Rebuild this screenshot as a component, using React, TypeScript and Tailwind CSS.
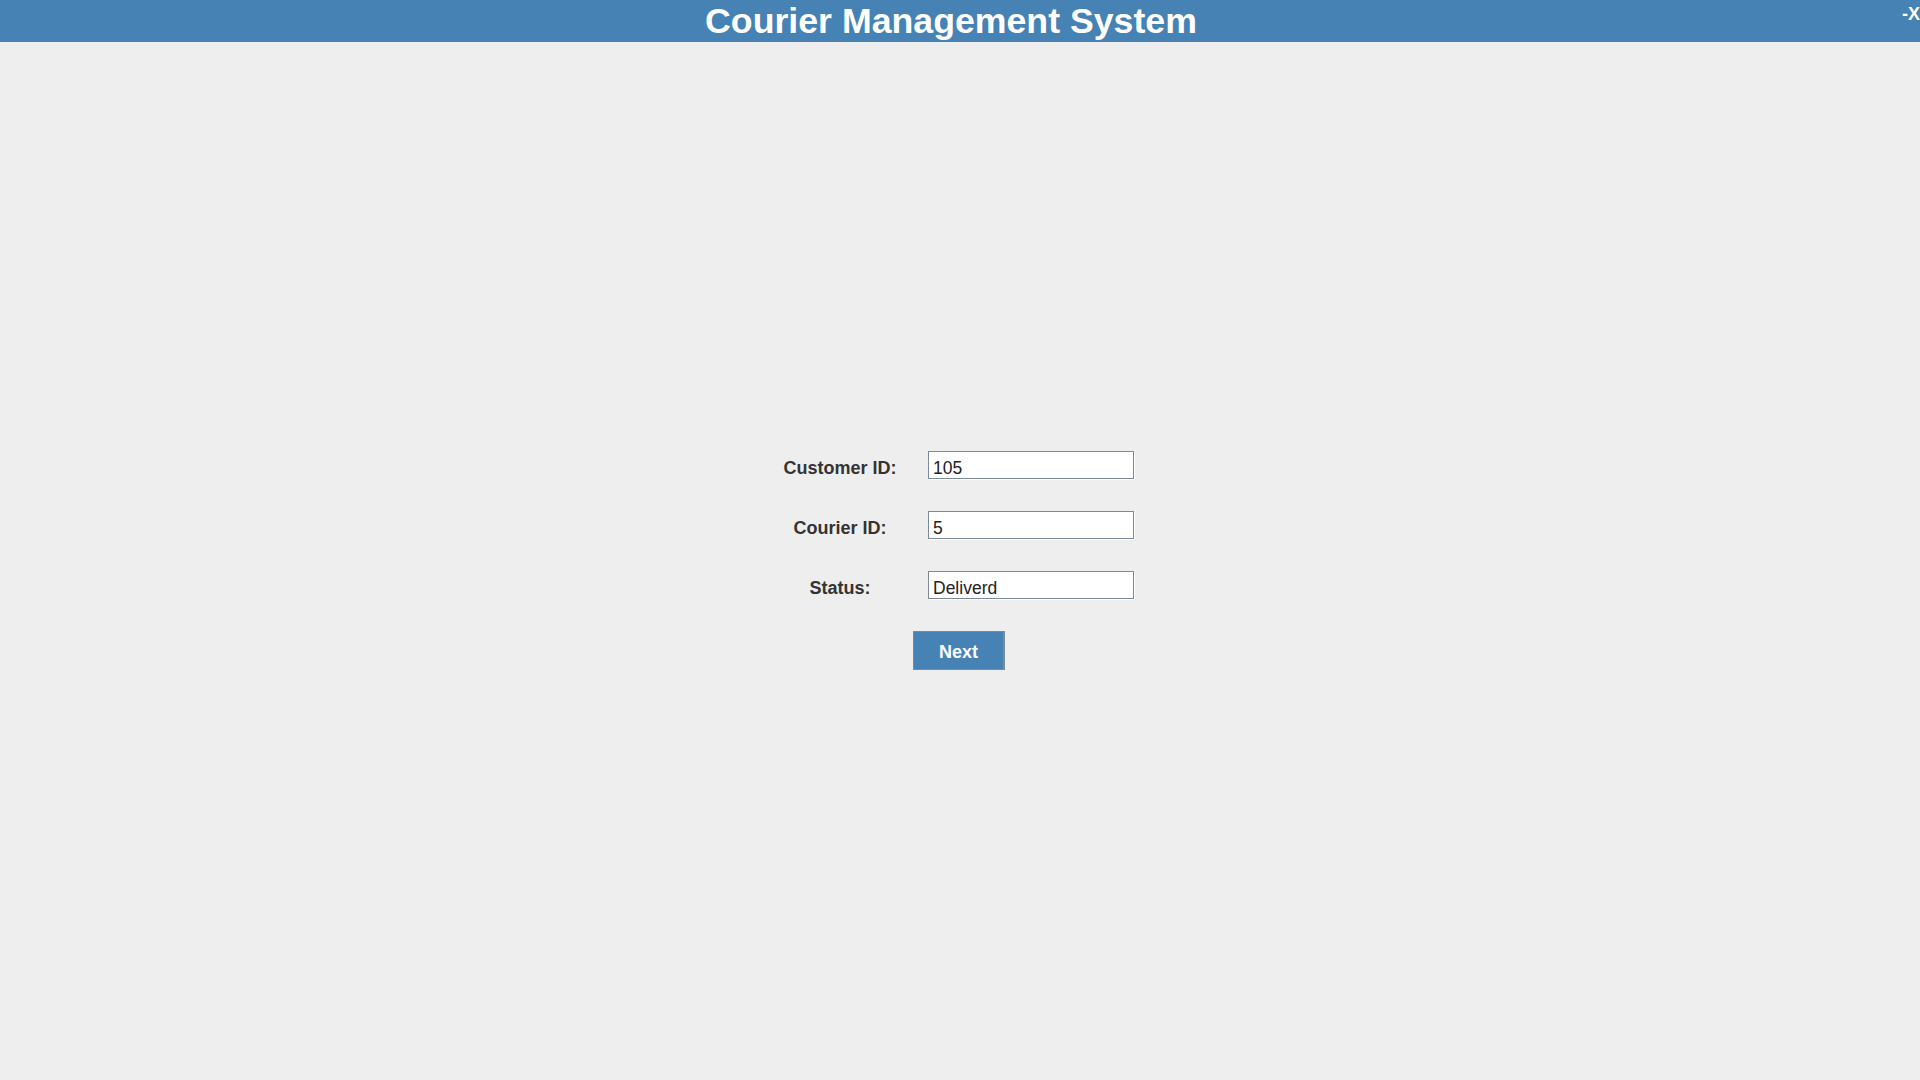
import { useState } from 'react';

const fields = [
  { label: 'Customer ID:', value: '105' },
  { label: 'Courier ID:', value: '5' },
  { label: 'Status:', value: 'Deliverd' },
];

export default function App() {
  const [values, setValues] = useState(fields.map((f) => f.value));

  return (
    <main
      className="w-full h-screen flex flex-col bg-[#eeeeee]"
      style={{ fontFamily: '"Liberation Sans", Arial, sans-serif' }}
    >
      {/* title bar */}
      <header className="h-[42px] flex bg-[#4682b4] text-white">
        <h1 className="flex-1 text-center text-[35.7px] leading-[42px] font-bold">
          Courier Management System
        </h1>
        <button className="w-[18px] pt-[4px] self-start text-[18px] leading-[20px] font-bold text-white">
          -X
        </button>
      </header>

      {/* form */}
      <section className="flex-1 flex items-center justify-center pb-[2px]">
        <form
          className="w-[400px] flex flex-col gap-8"
          onSubmit={(e) => e.preventDefault()}
        >
          {fields.map((f, i) => (
            <div key={f.label} className="flex items-start gap-2">
              <label className="w-[160px] pt-[7px] text-center text-[18px] leading-[20px] font-bold text-[#333333]">
                {f.label}
              </label>
              <input
                value={values[i]}
                onChange={(e) =>
                  setValues((v) => v.map((x, j) => (j === i ? e.target.value : x)))
                }
                className="w-[206px] h-[28px] pl-[4px] pt-[7px] pb-0 bg-white border border-[#7a8a99] text-[17.5px] leading-[20px] text-[#222222] outline-none shadow-[1px_1px_0_#ffffff]"
              />
            </div>
          ))}
          <div className="flex justify-center pr-[2px]">
            <button
              type="submit"
              className="w-[92px] h-[39px] pt-[4px] bg-[#4682b4] border border-r-2 border-[#7a8a99] text-white text-[18px] leading-[20px] font-bold"
            >
              Next
            </button>
          </div>
        </form>
      </section>
    </main>
  );
}
